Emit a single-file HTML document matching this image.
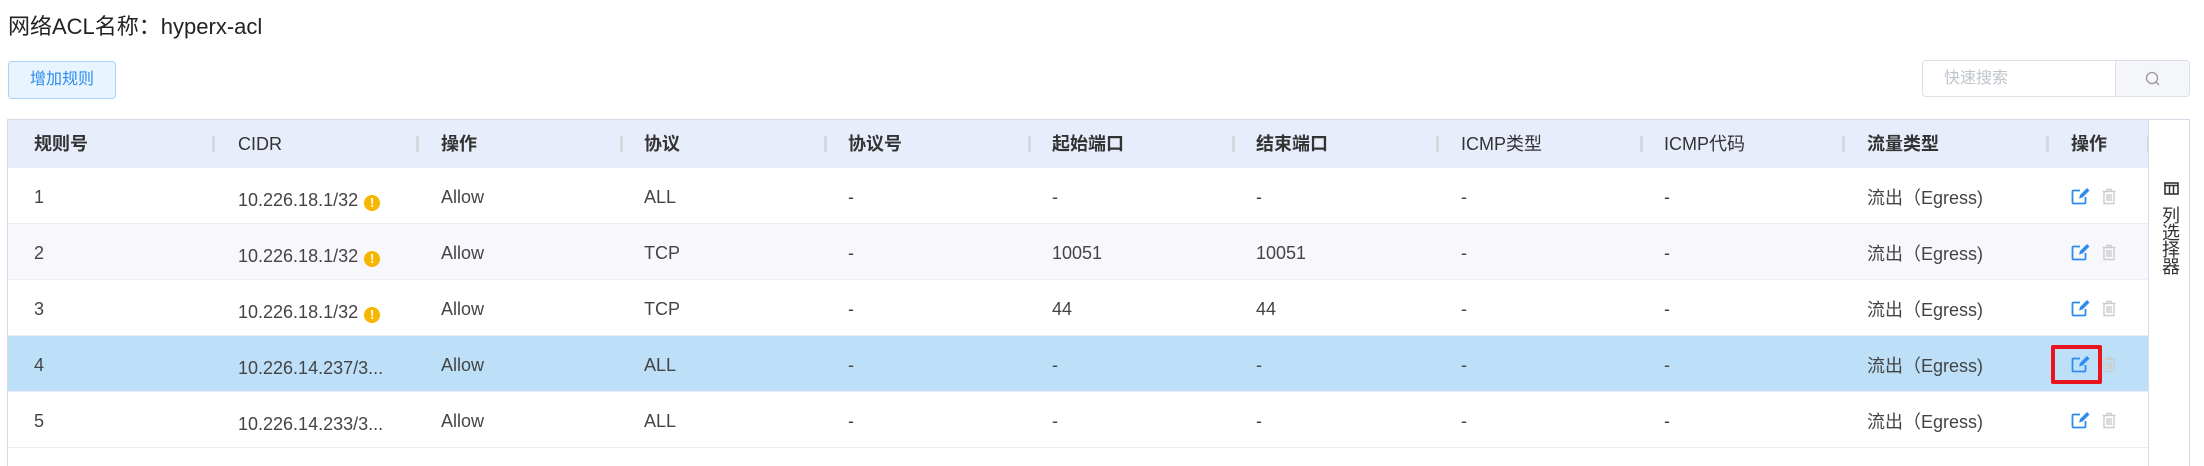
<!DOCTYPE html>
<html><head><meta charset="utf-8"><style>
*{margin:0;padding:0;box-sizing:border-box}
body{width:2204px;height:466px;background:#fff;font-family:"Liberation Sans","Noto Sans CJK SC",sans-serif;color:#333;position:relative;overflow:hidden}
.a{position:absolute;white-space:nowrap}
.title{left:8px;top:9px;font-size:22px;color:#222}
.btn{left:8px;top:61px;width:108px;height:38px;border:1px solid #a9d3f8;background:#e8f4fe;border-radius:4px;color:#2d8cf0;font-size:16px;text-align:center;line-height:36px}
.search{left:1922px;top:60px;width:268px;height:37px;border:1px solid #dcdfe6;border-radius:4px;overflow:hidden}
.search .in{position:absolute;left:0;top:0;width:192px;height:35px;color:#c0c4cc;font-size:16px;line-height:35px;padding-left:21px}
.search .sb{position:absolute;left:192px;top:0;width:76px;height:35px;background:#f5f6fa;border-left:1px solid #dcdfe6}
.tbl{left:7px;top:119px;width:2141px;height:347px;border-left:1px solid #d6dbe8;border-top:1px solid #d6dbe8}
.hd{position:absolute;left:0;top:0;width:2141px;height:49px;background:#e8edfb;border-bottom:1px solid #d3d8e6}
.row{position:absolute;left:0;width:2141px;height:56px;border-bottom:1px solid #ebeef5}
.cell{position:absolute;font-size:18px;color:#444;top:0;line-height:58px}
.h{font-weight:bold;color:#333;line-height:48px}
.sep{position:absolute;top:16px;width:3px;height:16px;background:#d5d8de}
.warn{display:inline-block;width:16px;height:16px;border-radius:50%;background:#f7b500;color:#fff;font-size:13px;font-weight:bold;text-align:center;line-height:16px;vertical-align:-1px;margin-left:6px}
.sel{left:2148px;top:119px;width:42px;height:347px;border:1px solid #d6dbe8;border-bottom:none;background:#fff}
.vt{position:absolute;left:8px;top:86px;writing-mode:vertical-rl;font-size:18px;color:#333;letter-spacing:-1px}
</style></head><body>
<div class="a title">网络ACL名称：hyperx-acl</div>
<div class="a btn">增加规则</div>
<div class="a search"><div class="in">快速搜索</div><div class="sb"><svg style="position:absolute;left:29px;top:10px" width="16" height="16" viewBox="0 0 16 16"><circle cx="7" cy="7" r="5.5" fill="none" stroke="#999" stroke-width="1.3"/><path d="M11 11l3 3" stroke="#999" stroke-width="1.3"/></svg></div></div>
<div class="a tbl">
<div class="hd">
<div class="cell h" style="left:26px">规则号</div>
<div class="cell h" style="left:230px;font-weight:normal">CIDR</div>
<div class="cell h" style="left:433px">操作</div>
<div class="cell h" style="left:636px">协议</div>
<div class="cell h" style="left:840px">协议号</div>
<div class="cell h" style="left:1044px">起始端口</div>
<div class="cell h" style="left:1248px">结束端口</div>
<div class="cell h" style="left:1453px;font-weight:normal">ICMP类型</div>
<div class="cell h" style="left:1656px;font-weight:normal">ICMP代码</div>
<div class="cell h" style="left:1859px">流量类型</div>
<div class="cell h" style="left:2063px">操作</div>
<div class="sep" style="left:204px"></div><div class="sep" style="left:408px"></div><div class="sep" style="left:612px"></div><div class="sep" style="left:816px"></div><div class="sep" style="left:1020px"></div><div class="sep" style="left:1224px"></div><div class="sep" style="left:1428px"></div><div class="sep" style="left:1632px"></div><div class="sep" style="left:1834px"></div><div class="sep" style="left:2038px"></div><div class="sep" style="left:2139px"></div>
</div>
</div>
<div id="rows"></div>
<div class="a sel"><svg style="position:absolute;left:15px;top:62px" width="15" height="13" viewBox="0 0 15 13"><rect x="1" y="1" width="13" height="11" fill="none" stroke="#333" stroke-width="1.6"/><path d="M1 3.5h13M5.5 3v9M9.5 3v9" stroke="#333" stroke-width="1.5"/></svg><div class="vt">列选择器</div></div>
<script>
var d=[["1","10.226.18.1/32",1,"ALL","-","-","-"],["2","10.226.18.1/32",1,"TCP","-","10051","10051"],["3","10.226.18.1/32",1,"TCP","-","44","44"],["4","10.226.14.237/3...",0,"ALL","-","-","-"],["5","10.226.14.233/3...",0,"ALL","-","-","-"]];
var bg=["#fff","#f8f8fc","#fff","#bde0f8","#fff"];
var h="";
var edit='<svg width="19" height="17" viewBox="0 0 19 17"><path d="M9 2.5H2.5a1 1 0 0 0-1 1v11a1 1 0 0 0 1 1h11a1 1 0 0 0 1-1V9" fill="none" stroke="#2d8cf0" stroke-width="1.8"/><path d="M8 10.5l1-3.5 7-7 2.5 2.5-7 7z" fill="#2d8cf0"/></svg>';
var del='<svg width="14" height="17" viewBox="0 0 14 17"><path d="M0.5 3.5h13M5 3.5V1.5h4v2M2 3.5v12h10v-12M5 6v7M7 6v7M9 6v7" fill="none" stroke="#ccc" stroke-width="1.4"/></svg>';
for(var i=0;i<5;i++){var r=d[i],t=168+i*56;
h+='<div class="a row" style="left:8px;top:'+t+'px;background:'+bg[i]+'">';
var xs=[26,230,433,636,840,1044,1248,1453,1656];
var v=[r[0],r[1]+(r[2]?'<span class="warn">!</span>':''),"Allow",r[3],r[4],r[5],r[6],"-","-"];
for(var j=0;j<9;j++)h+='<div class="cell" style="left:'+xs[j]+'px;'+(j==1?'line-height:64px':'')+'">'+v[j]+'</div>';
h+='<div class="cell" style="left:1859px;line-height:60px">流出（Egress)</div>';
h+='<div style="position:absolute;left:2063px;top:20px">'+edit+'</div><div style="position:absolute;left:2094px;top:20px">'+del+'</div>';
if(i==3)h+='<div style="position:absolute;left:2043px;top:9px;width:51px;height:39px;border:4px solid #e8141e;border-radius:2px"></div>';
h+='</div>';}
document.getElementById("rows").innerHTML=h;
</script>
</body></html>
